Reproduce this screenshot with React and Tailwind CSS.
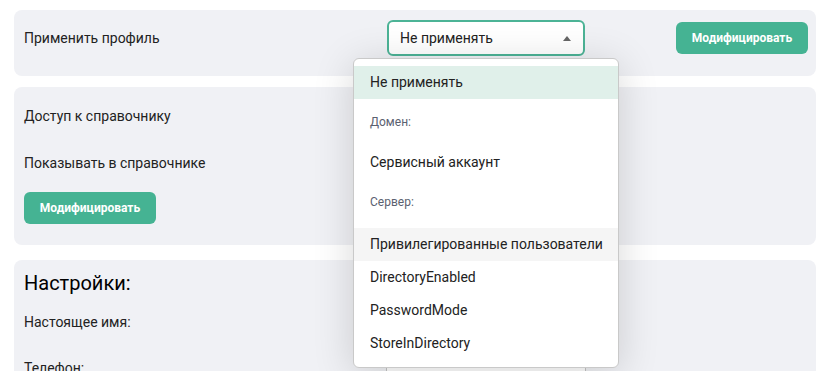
import React from 'react';

const options = [
  { type: 'item', label: 'Не применять', selected: true },
  { type: 'group', label: 'Домен:', h: 'h-[47px]' },
  { type: 'item', label: 'Сервисный аккаунт' },
  { type: 'group', label: 'Сервер:', h: 'h-[49px]' },
  { type: 'item', label: 'Привилегированные пользователи', hover: true },
  { type: 'item', label: 'DirectoryEnabled' },
  { type: 'item', label: 'PasswordMode' },
  { type: 'item', label: 'StoreInDirectory' },
];

const ModifyButton = () => (
  <button className="h-8 w-[132px] rounded-md bg-[#45b393] text-xs font-bold text-white">
    Модифицировать
  </button>
);

export default function App() {
  return (
    <div className="relative h-[371px] w-[820px] overflow-hidden bg-white font-['Roboto',sans-serif] text-sm text-[#222]">
      <div className="flex flex-col pl-[14px] pr-[4px] pt-[10px]">
        {/* Apply profile */}
        <div className="flex h-[66px] items-start rounded-lg bg-[#f0f1f5] pl-[10px] pr-2 pt-[10px]">
          <div className="w-[363px] pt-[8px] leading-5">Применить профиль</div>
          <div className="flex h-9 w-[198px] items-center justify-between rounded-md border-2 border-[#4cb396] bg-white pl-[11px] pr-3">
            <span>Не применять</span>
            <span className="h-0 w-0 border-x-[4px] border-b-[5px] border-x-transparent border-b-[#666]" />
          </div>
          <div className="ml-auto pt-[2px]">
            <ModifyButton />
          </div>
        </div>

        {/* Directory */}
        <div className="mt-[11px] flex h-[158px] flex-col rounded-lg bg-[#f0f1f5] pl-[10px]">
          <div className="mt-[19px] leading-5">Доступ к справочнику</div>
          <div className="mt-[27px] leading-5">Показывать в справочнике</div>
          <div className="mt-[19px]">
            <ModifyButton />
          </div>
        </div>

        {/* Settings */}
        <div className="mt-[15px] flex h-[140px] flex-col rounded-lg bg-[#f0f1f5] pl-[10px]">
          <div className="mt-[9px] text-xl leading-7 text-black">Настройки:</div>
          <div className="mt-[7px] flex items-center">
            <div className="w-[362px] leading-5">Настоящее имя:</div>
            <div className="h-9 w-[200px] rounded-md border border-[#c4c4c4] bg-white" />
          </div>
          <div className="mt-[10px] flex items-center">
            <div className="w-[362px] leading-5">Телефон:</div>
            <div className="h-9 w-[200px] rounded-md border border-[#c4c4c4] bg-white" />
          </div>
        </div>
      </div>

      {/* Open dropdown menu */}
      <div className="absolute left-[353px] top-[58px] w-[266px] rounded-md border border-[#c9c9c9] bg-white py-[7px] shadow-[0_6px_40px_rgba(0,0,0,0.16)]">
        {options.map((o) =>
          o.type === 'group' ? (
            <div key={o.label} className={`${o.h} pl-4 pt-[15px] text-xs leading-4 text-[#5b6170]`}>
              {o.label}
            </div>
          ) : (
            <div
              key={o.label}
              className={`h-[33px] pl-4 pt-[6px] leading-5 ${o.selected ? 'bg-[#e0f0ea]' : o.hover ? 'bg-[#f5f5f5]' : ''}`}
            >
              {o.label}
            </div>
          )
        )}
      </div>
    </div>
  );
}
